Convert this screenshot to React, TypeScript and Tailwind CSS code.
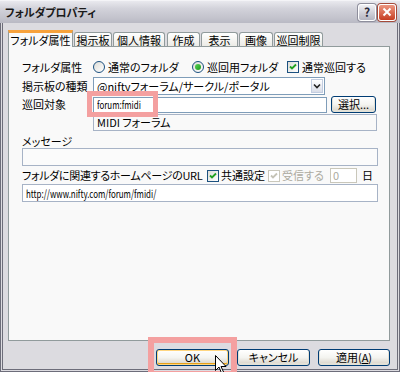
import type { ReactNode } from 'react'

// the old UI font draws latin much narrower than Noto, so squeeze long latin strings
const narrow = 'inline-block origin-left scale-x-[0.72]'

function Radio({ checked = false }: { checked?: boolean }) {
  return (
    <span className="flex h-[12px] w-[12px] shrink-0 items-center justify-center rounded-full border border-[#1c5180] bg-gradient-to-br from-[#dcdcd7] to-white">
      {checked && <span className="h-[6px] w-[6px] rounded-full bg-gradient-to-br from-[#55d355] to-[#1a9a1a]" />}
    </span>
  )
}

function Check({ checked = false, disabled = false }: { checked?: boolean; disabled?: boolean }) {
  return (
    <span
      className={`flex h-[12px] w-[12px] shrink-0 items-center justify-center border ${
        disabled ? 'border-[#cac8bb] bg-white' : 'border-[#1c5180] bg-gradient-to-br from-[#dcdcd7] to-white'
      }`}
    >
      {checked && (
        <svg width="8" height="8" viewBox="0 0 8 8" aria-hidden>
          <path
            d="M1 3.5 L3 5.5 L7 1.5"
            fill="none"
            stroke={disabled ? '#c5c3b6' : '#21a121'}
            strokeWidth="1.8"
          />
        </svg>
      )}
    </span>
  )
}

function XpButton({ children, w, focus = false }: { children: ReactNode; w: string; focus?: boolean }) {
  return (
    <button
      type="button"
      className={`${w} flex h-[17px] shrink-0 items-center justify-center whitespace-nowrap rounded-[3px] border border-[#003c74] bg-gradient-to-b from-white via-[#f4f4f0] to-[#d6d0c5] text-[11px] leading-none text-black ${
        focus ? 'shadow-[inset_0_0_0_1px_#ffd680,inset_0_-1px_0_1px_#e5a01a]' : 'shadow-[inset_0_-1px_0_1px_#e3e1d7]'
      }`}
    >
      {children}
    </button>
  )
}

const tabs = [
  { label: '掲示板', w: 'w-[38px]', ml: 'ml-[1px]' },
  { label: '個人情報', w: 'w-[52px]', ml: 'ml-[1px]' },
  { label: '作成', w: 'w-[33px]', ml: 'ml-[2px]' },
  { label: '表示', w: 'w-[37px]', ml: 'ml-[1px]' },
  { label: '画像', w: 'w-[34px]', ml: 'ml-[1px]' },
  { label: '巡回制限', w: 'w-[49px]', ml: 'ml-[1px]' },
]

export default function App() {
  return (
    <div className="relative h-[372px] w-[400px] overflow-hidden whitespace-nowrap bg-[#dcdbe0] font-['Noto_Sans_CJK_JP',sans-serif] text-[11px] leading-none text-black [font-feature-settings:'palt']">
      {/* title bar */}
      <div className="flex h-[23px] items-center justify-between border-t border-[#f4f4f7] bg-[linear-gradient(#e9e9ee,#d2d2da_35%,#c4c4cd_75%,#b9b9c4)] pl-[5px] pr-[4px]">
        <span className="text-[11px] font-bold text-[#1a1a1a]">フォルダプロパティ</span>
        <div className="flex items-center gap-[2px]">
          <span className="flex h-[17px] w-[18px] items-center justify-center rounded-[3px] border border-white bg-gradient-to-b from-[#f0f0f4] to-[#b4b4c0] text-[12px] font-bold text-[#2a2a3a] shadow-[0_0_0_1px_#8e8e9c]">
            ?
          </span>
          <span className="flex h-[17px] w-[18px] items-center justify-center rounded-[3px] border border-white bg-gradient-to-b from-[#ec9680] to-[#c63c20] shadow-[0_0_0_1px_#a44a3a]">
            <svg width="10" height="10" viewBox="0 0 10 10" aria-hidden>
              <path d="M1.5 1.5 L8.5 8.5 M8.5 1.5 L1.5 8.5" stroke="white" strokeWidth="2" />
            </svg>
          </span>
        </div>
      </div>

      {/* body with double frame */}
      <div className="h-[349px] border-x-[3px] border-b-[3px] border-double border-[#6d6d7a] pl-[5px] pt-[6px]">
        {/* tab strip */}
        <div className="relative z-10 flex h-[17px] items-end">
          <div className="-mb-px flex h-[17px] w-[65px] items-center justify-center border-x border-t-[3px] border-x-[#919b9c] border-t-[#f7a23c] bg-[#f9f9f9] pt-[1px]">
            フォルダ属性
          </div>
          {tabs.map(t => (
            <div
              key={t.label}
              className={`${t.w} ${t.ml} flex h-[14px] items-center justify-center rounded-t-[3px] border-x border-t border-[#919b9c] bg-gradient-to-b from-white to-[#ecebe6] pt-[1px]`}
            >
              {t.label}
            </div>
          ))}
        </div>

        {/* panel */}
        <div className="flex h-[295px] w-[382px] flex-col border border-[#919b9c] bg-[#f9f9f9] pl-[13px] pr-[11px] pt-[11px]">
          <div className="flex h-[18px] items-center">
            <span className="w-[71px]">フォルダ属性</span>
            <span className="flex w-[99px] items-center gap-[3px]">
              <Radio />
              通常のフォルダ
            </span>
            <span className="flex w-[95px] items-center gap-[3px]">
              <Radio checked />
              巡回用フォルダ
            </span>
            <span className="flex items-center gap-[3px]">
              <Check checked />
              通常巡回する
            </span>
          </div>

          <div className="mt-[1px] flex h-[18px] items-center">
            <span className="w-[71px]">掲示板の種類</span>
            <div className="flex h-[18px] w-[232px] items-center justify-between border border-[#7f9db9] bg-white pl-[3px] pr-[1px]">
              <span>@niftyフォーラム/サークル/ポータル</span>
              <span className="flex h-[14px] w-[12px] items-center justify-center border border-[#c3cde0] bg-gradient-to-b from-white to-[#d9dde8]">
                <svg width="8" height="6" viewBox="0 0 8 6" aria-hidden>
                  <path d="M1 1.5 L4 4.5 L7 1.5" fill="none" stroke="#222" strokeWidth="1.6" />
                </svg>
              </span>
            </div>
          </div>

          <div className="mt-[1px] flex h-[17px] items-center">
            <span className="w-[71px]">巡回対象</span>
            <div className="flex h-[16px] w-[234px] items-center border border-[#7f9db9] bg-white pl-[3px]">
              <span className={narrow}>forum:fmidi</span>
            </div>
            <div className="ml-[4px]">
              <XpButton w="w-[45px]">選択...</XpButton>
            </div>
          </div>

          <div className="ml-[71px] mt-[1px] flex h-[17px] w-[284px] items-center border border-[#a7b3c6] bg-[#f9f9f9] pl-[3px]">
            MIDI フォーラム
          </div>

          <div className="mt-[3px] flex h-[14px] items-center">メッセージ</div>
          <div className="h-[18px] w-full border border-[#a7b3c6] bg-[#fbfbfb]" />

          <div className="mt-[1px] flex h-[17px] items-center">
            <span className="w-[185px] tracking-[-0.3px]">フォルダに関連するホームページのURL</span>
            <span className="flex w-[61px] items-center gap-[2px]">
              <Check checked />
              共通設定
            </span>
            <span className="flex w-[62px] items-center gap-[2px] text-[#acaaa0]">
              <Check checked disabled />
              受信する
            </span>
            <span className="flex h-[15px] w-[27px] items-center border border-[#c9c7ba] bg-white pl-[2px] text-[#acaaa0]">
              0
            </span>
            <span className="ml-[5px]">日</span>
          </div>
          <div className="flex h-[18px] w-full items-center border border-[#a7b3c6] bg-white pl-[3px]">
            <span className={narrow}>http://www.nifty.com/forum/fmidi/</span>
          </div>
        </div>

        {/* buttons */}
        <div className="mt-[8px] flex gap-[8px] pl-[148px]">
          <XpButton w="w-[73px]" focus>
            OK
          </XpButton>
          <XpButton w="w-[73px]">キャンセル</XpButton>
          <XpButton w="w-[72px]">
            適用(<span className="underline">A</span>)
          </XpButton>
        </div>
      </div>

      {/* annotation highlights */}
      <div className="pointer-events-none absolute left-[87px] top-[91px] h-[26px] w-[71px] border-[5px] border-[#f4a0a0]" />
      <div className="pointer-events-none absolute left-[148px] top-[337px] h-[40px] w-[89px] border-[6px] border-[#f4a0a0]" />

      {/* mouse cursor */}
      <svg className="absolute left-[215px] top-[355px]" width="12" height="19" viewBox="0 0 12 19" aria-hidden>
        <path d="M0.5 0.5 L0.5 15.5 L4 12 L6.5 18 L8.5 17 L6 11.5 L11 11.5 Z" fill="white" stroke="black" strokeWidth="1" />
      </svg>
    </div>
  )
}
